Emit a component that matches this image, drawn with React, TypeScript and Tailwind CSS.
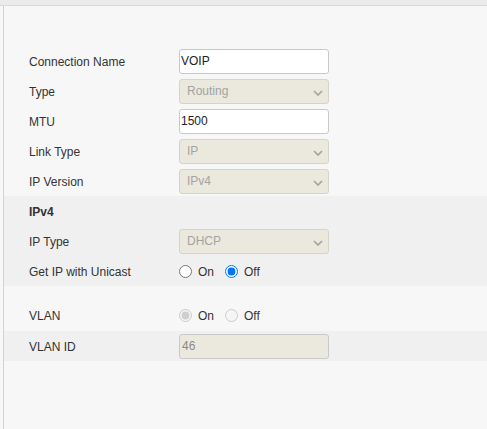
import React from "react";

const font = { fontFamily: '"Liberation Sans", Arial, sans-serif' };

function Chevron() {
  return (
    <svg width="10" height="6" viewBox="0 0 10 6" className="absolute right-[5px] top-[10px]">
      <path d="M1 1 L5 5 L9 1" fill="none" stroke="#a3a3a3" strokeWidth="1.7" />
    </svg>
  );
}

function TextBox({ value }: { value: string }) {
  return (
    <div className="w-[150px] h-[25px] bg-white border border-[#c9c9c9] rounded-[3px] flex items-center pl-[1px] text-[12px] text-[#222]">
      {value}
    </div>
  );
}

function SelectBox({ value }: { value: string }) {
  return (
    <div className="relative w-[150px] h-[25px] bg-[#ebe9dd] border border-[#d6d4ca] rounded-[3px] flex items-center pl-[7px] text-[12px] text-[#a3a3a3]">
      {value}
      <Chevron />
    </div>
  );
}

function Row({ label, children, bold }: { label: string; children?: React.ReactNode; bold?: boolean }) {
  return (
    <div className="h-[30px] flex items-center pl-[25px]">
      <div className={`w-[150px] text-[12px] text-[#333] pt-[2px] ${bold ? "font-bold" : ""}`}>{label}</div>
      {children}
    </div>
  );
}

function Radio({ checked, disabled, label }: { checked?: boolean; disabled?: boolean; label: string }) {
  return (
    <label className="flex items-center text-[12px] text-[#333]">
      <input
        type="radio"
        checked={!!checked}
        disabled={disabled}
        readOnly
        className="w-[13px] h-[13px] m-0"
      />
      <span className="ml-[6px] mr-[11px] pt-[2px]">{label}</span>
    </label>
  );
}

export default function App() {
  return (
    <div style={font} className="w-full h-[429px] bg-[#f7f7f7] flex flex-col overflow-hidden">
      <div className="h-[6px] bg-[#ebebeb] border-b border-[#dadada] shrink-0" />
      <div className="flex-1 ml-[3px] border-l border-[#d3d3d3] pt-[40px]">
        <Row label="Connection Name">
          <TextBox value="VOIP" />
        </Row>
        <Row label="Type">
          <SelectBox value="Routing" />
        </Row>
        <Row label="MTU">
          <TextBox value="1500" />
        </Row>
        <Row label="Link Type">
          <SelectBox value="IP" />
        </Row>
        <Row label="IP Version">
          <SelectBox value="IPv4" />
        </Row>
        <div className="bg-[#f0f0f0]">
          <Row label="IPv4" bold />
          <Row label="IP Type">
            <SelectBox value="DHCP" />
          </Row>
          <Row label="Get IP with Unicast">
            <div className="flex items-center">
              <Radio label="On" />
              <Radio label="Off" checked />
            </div>
          </Row>
        </div>
        <div className="h-[14px]" />
        <Row label="VLAN">
          <div className="flex items-center">
            <Radio label="On" checked disabled />
            <Radio label="Off" disabled />
          </div>
        </Row>
        <div className="bg-[#f0f0f0] mt-[1px]">
          <Row label="VLAN ID">
            <div className="w-[150px] h-[25px] bg-[#ebe9dd] border border-[#c9c9c9] rounded-[3px] flex items-center pl-[2px] text-[12px] text-[#8a8a8a]">
              46
            </div>
          </Row>
        </div>
      </div>
    </div>
  );
}
